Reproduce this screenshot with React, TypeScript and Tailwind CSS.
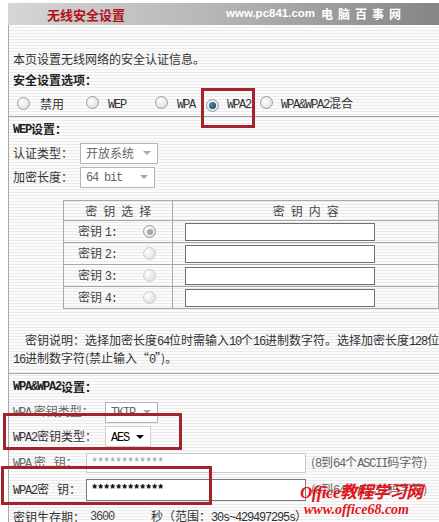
import React from 'react'

// latin runs look like a half-width song-ti, so squeeze a mono font to 6px per char
const E = ({ children }: { children: React.ReactNode }) => (
  <span className="font-['Liberation_Mono',monospace] text-[12px] tracking-[-1.2px]">{children}</span>
)

function Radio({ state = 'off' }: { state?: 'off' | 'on' | 'grey' | 'dim' }) {
  const ring = state === 'dim' ? 'border-[#cfcfcf]' : 'border-[#9c9c9c]'
  return (
    <span
      className={`relative inline-flex w-[13px] h-[13px] shrink-0 items-center justify-center rounded-full border ${ring} bg-[radial-gradient(circle_at_35%_35%,#ffffff,#d6d6d6)]`}
    >
      {state === 'on' && <span className="w-[7px] h-[7px] rounded-full bg-[radial-gradient(circle_at_35%_35%,#4c8ab4,#123c5c)]" />}
      {state === 'grey' && <span className="w-[6px] h-[6px] rounded-full bg-[#a8a8a8]" />}
    </span>
  )
}

function Select({ text, w, active = false }: { text: React.ReactNode; w: string; active?: boolean }) {
  return (
    <div
      className={`flex items-center justify-between h-[21px] ${w} border bg-white pl-[5px] pr-[6px] ${
        active ? 'border-[#d0d0d0] text-black' : 'border-[#b4b4b4] text-[#666]'
      }`}
    >
      <span>{text}</span>
      <span
        className={`w-0 h-0 border-l-[4px] border-r-[4px] border-t-[4px] border-l-transparent border-r-transparent ${
          active ? 'border-t-black' : 'border-t-[#a8a8a8]'
        }`}
      />
    </div>
  )
}

const keys = ['1', '2', '3', '4']

export default function App() {
  return (
    <div className="relative w-[439px] h-[522px] overflow-hidden bg-white text-[12px] text-[#333] font-['Noto_Sans_CJK_SC','Liberation_Sans',sans-serif]">
      {/* title bar */}
      <div className="mt-[3px] ml-[8px] h-[22px] flex items-center bg-gradient-to-r from-[#d6d6d6] via-[#b4b4b4] to-[#858585]">
        <span className="ml-[39px] w-[179px] text-[13px] font-bold text-[#b0121a] leading-none">无线安全设置</span>
        <span className="font-['Liberation_Sans',sans-serif] font-bold text-[11.5px] text-white leading-none">www.pc841.com</span>
        <span className="ml-[6px] font-bold text-[12px] text-white tracking-[5px] leading-none">电脑百事网</span>
      </div>

      <div className="ml-[8px] h-[497px] border-l border-[#a8a8a8] bg-[repeating-linear-gradient(180deg,#fbfbfb_0px,#fbfbfb_2px,#ebebeb_2px,#ebebeb_3px)]">
        <div className="pt-[24px] pl-[4px] h-[44px] flex items-end">
          <div className="h-[20px] flex items-center">本页设置无线网络的安全认证信息。</div>
        </div>
        <div className="pl-[4px] h-[22px] flex items-center font-bold text-[#222]">安全设置选项：</div>

        <div className="pl-[8px] h-[26px] flex items-center border-b border-[#a0a0a0]">
          <Radio />
          <span className="ml-[10px]">禁用</span>
          <span className="ml-[22px]"><Radio /></span>
          <span className="ml-[9px]"><E>WEP</E></span>
          <span className="ml-[29px]"><Radio /></span>
          <span className="ml-[9px]"><E>WPA</E></span>
          <span className="ml-[11px]"><Radio state="on" /></span>
          <span className="ml-[8px]"><E>WPA2</E></span>
          <span className="ml-[9px]"><Radio /></span>
          <span className="ml-[8px]"><E>WPA&amp;WPA2</E>混合</span>
        </div>

        <div className="pl-[4px] h-[24px] flex items-center font-bold text-[#222]">
          <span className="font-bold"><E>WEP</E></span>设置：
        </div>
        <div className="pl-[4px] h-[24px] flex items-center">
          <span className="w-[67px]">认证类型：</span>
          <Select text="开放系统" w="w-[78px]" />
        </div>
        <div className="pl-[4px] h-[24px] flex items-center">
          <span className="w-[67px]">加密长度：</span>
          <Select text={<E>64 bit</E>} w="w-[75px]" />
        </div>

        <table className="mt-[11px] ml-[54px] border-collapse text-[#444]">
          <tbody>
            <tr className="h-[20px]">
              <td className="w-[111px] border border-[#a8a8a8] text-center tracking-[6px] pl-[6px]">密钥选择</td>
              <td className="w-[272px] border border-[#a8a8a8] text-center tracking-[6px] pl-[6px]">密钥内容</td>
            </tr>
            {keys.map((k) => (
              <tr key={k} className="h-[22px]">
                <td className="border border-[#a8a8a8]">
                  <div className="flex items-center pl-[14px]">
                    <span className="w-[65px]">
                      密钥 <E>{k}:</E>
                    </span>
                    <Radio state={k === '1' ? 'grey' : 'dim'} />
                  </div>
                </td>
                <td className="border border-[#a8a8a8]">
                  <div className="ml-[12px] w-[190px] h-[18px] border border-[#6e6e6e] bg-white" />
                </td>
              </tr>
            ))}
          </tbody>
        </table>

        <div className="mt-[23px] pl-[4px] whitespace-nowrap leading-[16px]">
          <div className="pl-[12px]">
            密钥说明：选择加密长度<E>64</E>位时需输入<E>10</E>个<E>16</E>进制数字符。选择加密长度<E>128</E>位时需输入<E>26</E>个
          </div>
          <div>
            <E>16</E>进制数字符(禁止输入“<E>0</E>”)。
          </div>
        </div>

        <div className="mt-[5px] border-t border-[#a8a8a8]" />
        <div className="pl-[4px] h-[26px] flex items-center font-bold text-[#222]">
          <E>WPA&amp;WPA2</E>设置：
        </div>

        <div className="pl-[4px] h-[24px] flex items-center text-[#666]">
          <span className="w-[92px]">
            <E>WPA</E> 密钥类型：
          </span>
          <Select text={<E>TKIP</E>} w="w-[53px]" />
        </div>
        <div className="pl-[4px] h-[25px] flex items-center">
          <span className="w-[92px]">
            <E>WPA2</E>密钥类型：
          </span>
          <Select text={<E>AES</E>} w="w-[46px]" active />
        </div>
        <div className="pl-[4px] h-[27px] flex items-center text-[#666]">
          <span className="w-[73px] whitespace-pre">
            <E>WPA</E> 密   钥：
          </span>
          <div className="w-[220px] h-[20px] border border-[#cacaca] bg-white pl-[4px] flex items-center text-[#999]">
            <E>************</E>
          </div>
          <span className="ml-[5px] whitespace-nowrap">
            (<E>8</E>到<E>64</E>个<E>ASCII</E>码字符)
          </span>
        </div>
        <div className="pl-[4px] h-[28px] flex items-center">
          <span className="w-[73px] whitespace-pre">
            <E>WPA2</E>密   钥：
          </span>
          <div className="w-[220px] h-[22px] border border-[#7a7a7a] bg-white pl-[4px] flex items-center text-black font-bold">
            <E>************</E>
          </div>
          <span className="ml-[5px] whitespace-nowrap text-[#666]">
            (<E>8</E>到<E>64</E>个<E>ASCII</E>码字符)
          </span>
        </div>
        <div className="pl-[4px] h-[26px] flex items-center">
          <span className="w-[73px]">密钥生存期：</span>
          <div className="w-[65px] h-[20px] pl-[4px] flex items-center text-[#444]">
            <E>3600</E>
          </div>
          <span className="whitespace-nowrap">
            秒（范围：<E>30s~429497295s</E>）
          </span>
        </div>
      </div>

      {/* red highlight boxes drawn over the form */}
      <div className="absolute left-[201px] top-[88px] w-[54px] h-[40px] border-[3px] border-[#a3242b]" />
      <div className="absolute left-[3px] top-[413px] w-[179px] h-[37px] border-[3px] border-[#a3242b]" />
      <div className="absolute left-[1px] top-[466px] w-[211px] h-[39px] border-[3px] border-[#a3242b]" />

      {/* watermark */}
      <div className="absolute left-[300px] top-[484px] leading-none italic font-bold text-[#e5141b]">
        <div className="text-[17px] font-['Liberation_Serif','Noto_Sans_CJK_SC',serif] tracking-[-0.5px]">Office教程学习网</div>
        <div className="mt-[2px] ml-[4px] text-[14px] font-['Liberation_Serif',serif]">www.office68.com</div>
      </div>
    </div>
  )
}
